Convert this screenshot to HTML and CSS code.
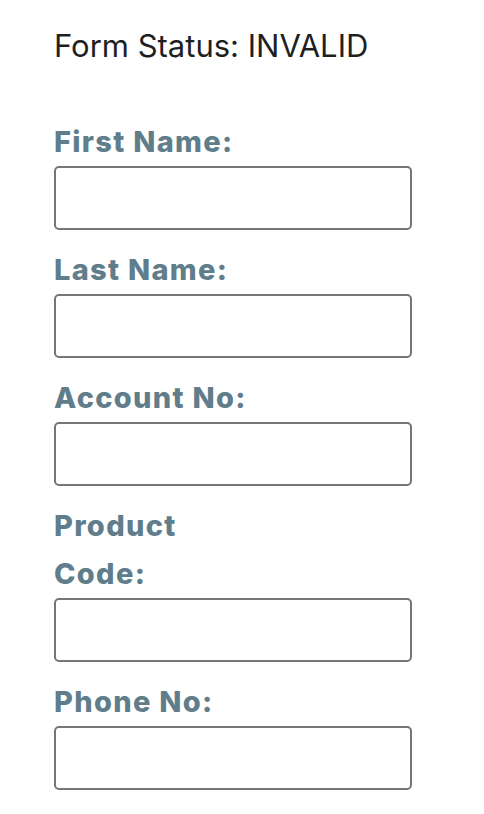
FILE: index.html
```html
<!DOCTYPE html>
<html>
<head>
<meta charset="utf-8">
<link rel="stylesheet" href="styles.css">
</head>
<body>
<div class="status">Form Status: INVALID</div>
<form class="form">
  <div class="field">
    <label class="label">First Name:</label>
    <input class="input" type="text">
  </div>
  <div class="field">
    <label class="label">Last Name:</label>
    <input class="input" type="text">
  </div>
  <div class="field">
    <label class="label">Account No:</label>
    <input class="input" type="text">
  </div>
  <div class="field">
    <label class="label">Product Code:</label>
    <input class="input" type="text">
  </div>
  <div class="field">
    <label class="label">Phone No:</label>
    <input class="input" type="text">
  </div>
</form>
</body>
</html>
```
FILE: styles.css
```css
html, body {
  margin: 0;
  padding: 0;
  background: #ffffff;
}
body {
  padding: 28px 0 0 54px;
  font-family: Inter, "Liberation Sans", sans-serif;
  color: #222222;
}
.status {
  font-size: 31px;
  line-height: 36px;
  color: #1f1f1f;
}
.form {
  margin-top: 54px;
  display: flex;
  flex-direction: column;
  gap: 16px;
}
.field {
  display: flex;
  flex-direction: column;
  align-items: flex-start;
}
.label {
  display: block;
  width: 205px;
  font-size: 29px;
  font-weight: 800;
  letter-spacing: 1.3px;
  line-height: 48px;
  color: #607d8b;
}
.input {
  box-sizing: border-box;
  width: 358px;
  height: 64px;
  margin: 0;
  border: 2px solid #767676;
  border-radius: 5px;
  background: #ffffff;
  padding: 0 8px;
  font-size: 28px;
}
```
